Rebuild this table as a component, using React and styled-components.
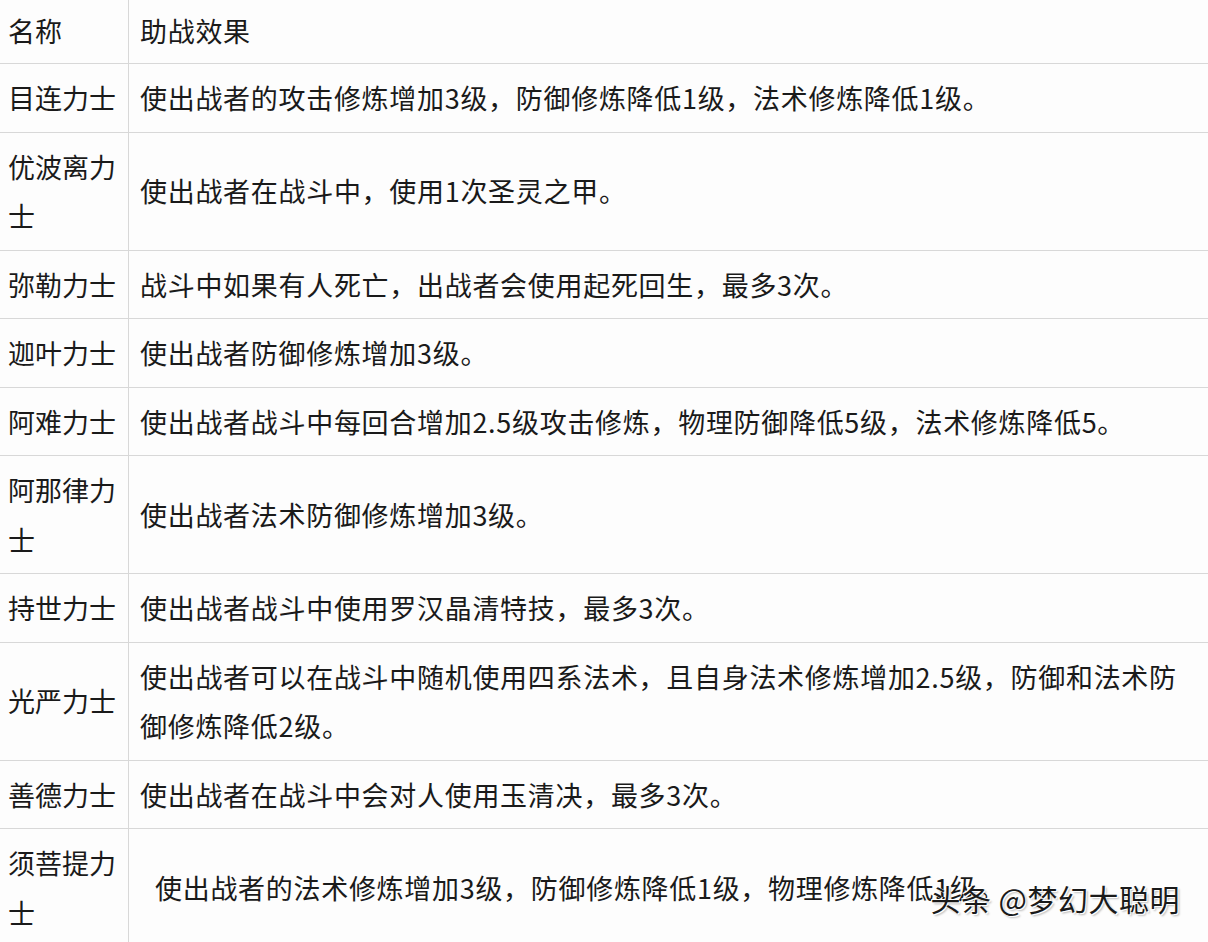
import React from "react";
import styled, {createGlobalStyle} from "styled-components";

const GlobalStyle = createGlobalStyle`
  html, body {
    margin: 0;
    padding: 0;
    background: #fdfdfd;
  }
  body {
    font-family: "Noto Sans CJK SC", "Noto Sans", sans-serif;
    color: #1a1a1a;
  }
`;

const Page = styled.div`
  position: relative;
  width: 1208px;
  height: 942px;
  overflow: hidden;
`;

const Table = styled.table`
  width: 1208px;
  border-collapse: collapse;
  table-layout: fixed;
  font-size: 27px;
  line-height: 49.5px;
`;

const Row = styled.tr`
  border-bottom: 1px solid #d8d8d8;
`;

const NameCell = styled.td`
  width: 120px;
  padding: ${props => props.$head ? "6px 0 7.5px 8px" : "9px 0 9px 8px"};
  border-right: 1px solid #d8d8d8;
  vertical-align: middle;
  word-break: break-all;
`;

const EffectCell = styled.td`
  padding: ${props => props.$head ? "6px 16px 7.5px 11px" : "9px 16px 9px 11px"};
  padding-left: ${props => props.$indent ? "26px" : "11px"};
  letter-spacing: 0.7px;
  vertical-align: middle;
`;

const Watermark = styled.div`
  position: absolute;
  right: 28px;
  bottom: 24px;
  font-size: 30px;
  line-height: 40px;
  letter-spacing: 0.5px;
  color: #1a1a1a;
  text-shadow: 1px 1px 0 #fff, -1px -1px 0 #fff, 2px 2px 2px rgba(0, 0, 0, 0.25);
`;

const rows = [
    ["目连力士", "使出战者的攻击修炼增加3级，防御修炼降低1级，法术修炼降低1级。"],
    ["优波离力士", "使出战者在战斗中，使用1次圣灵之甲。"],
    ["弥勒力士", "战斗中如果有人死亡，出战者会使用起死回生，最多3次。"],
    ["迦叶力士", "使出战者防御修炼增加3级。"],
    ["阿难力士", "使出战者战斗中每回合增加2.5级攻击修炼，物理防御降低5级，法术修炼降低5。"],
    ["阿那律力士", "使出战者法术防御修炼增加3级。"],
    ["持世力士", "使出战者战斗中使用罗汉晶清特技，最多3次。"],
    ["光严力士", "使出战者可以在战斗中随机使用四系法术，且自身法术修炼增加2.5级，防御和法术防御修炼降低2级。"],
    ["善德力士", "使出战者在战斗中会对人使用玉清决，最多3次。"],
    ["须菩提力士", "使出战者的法术修炼增加3级，防御修炼降低1级，物理修炼降低1级。", true],
];

export default function App() {
    return (
        <Page>
            <GlobalStyle/>
            <Table>
                <tbody>
                <Row>
                    <NameCell $head>名称</NameCell>
                    <EffectCell $head>助战效果</EffectCell>
                </Row>
                {rows.map(([name, effect, indent]) => (
                    <Row key={name}>
                        <NameCell>{name}</NameCell>
                        <EffectCell $indent={indent}>{effect}</EffectCell>
                    </Row>
                ))}
                </tbody>
            </Table>
            <Watermark>头条 @梦幻大聪明</Watermark>
        </Page>
    );
}
